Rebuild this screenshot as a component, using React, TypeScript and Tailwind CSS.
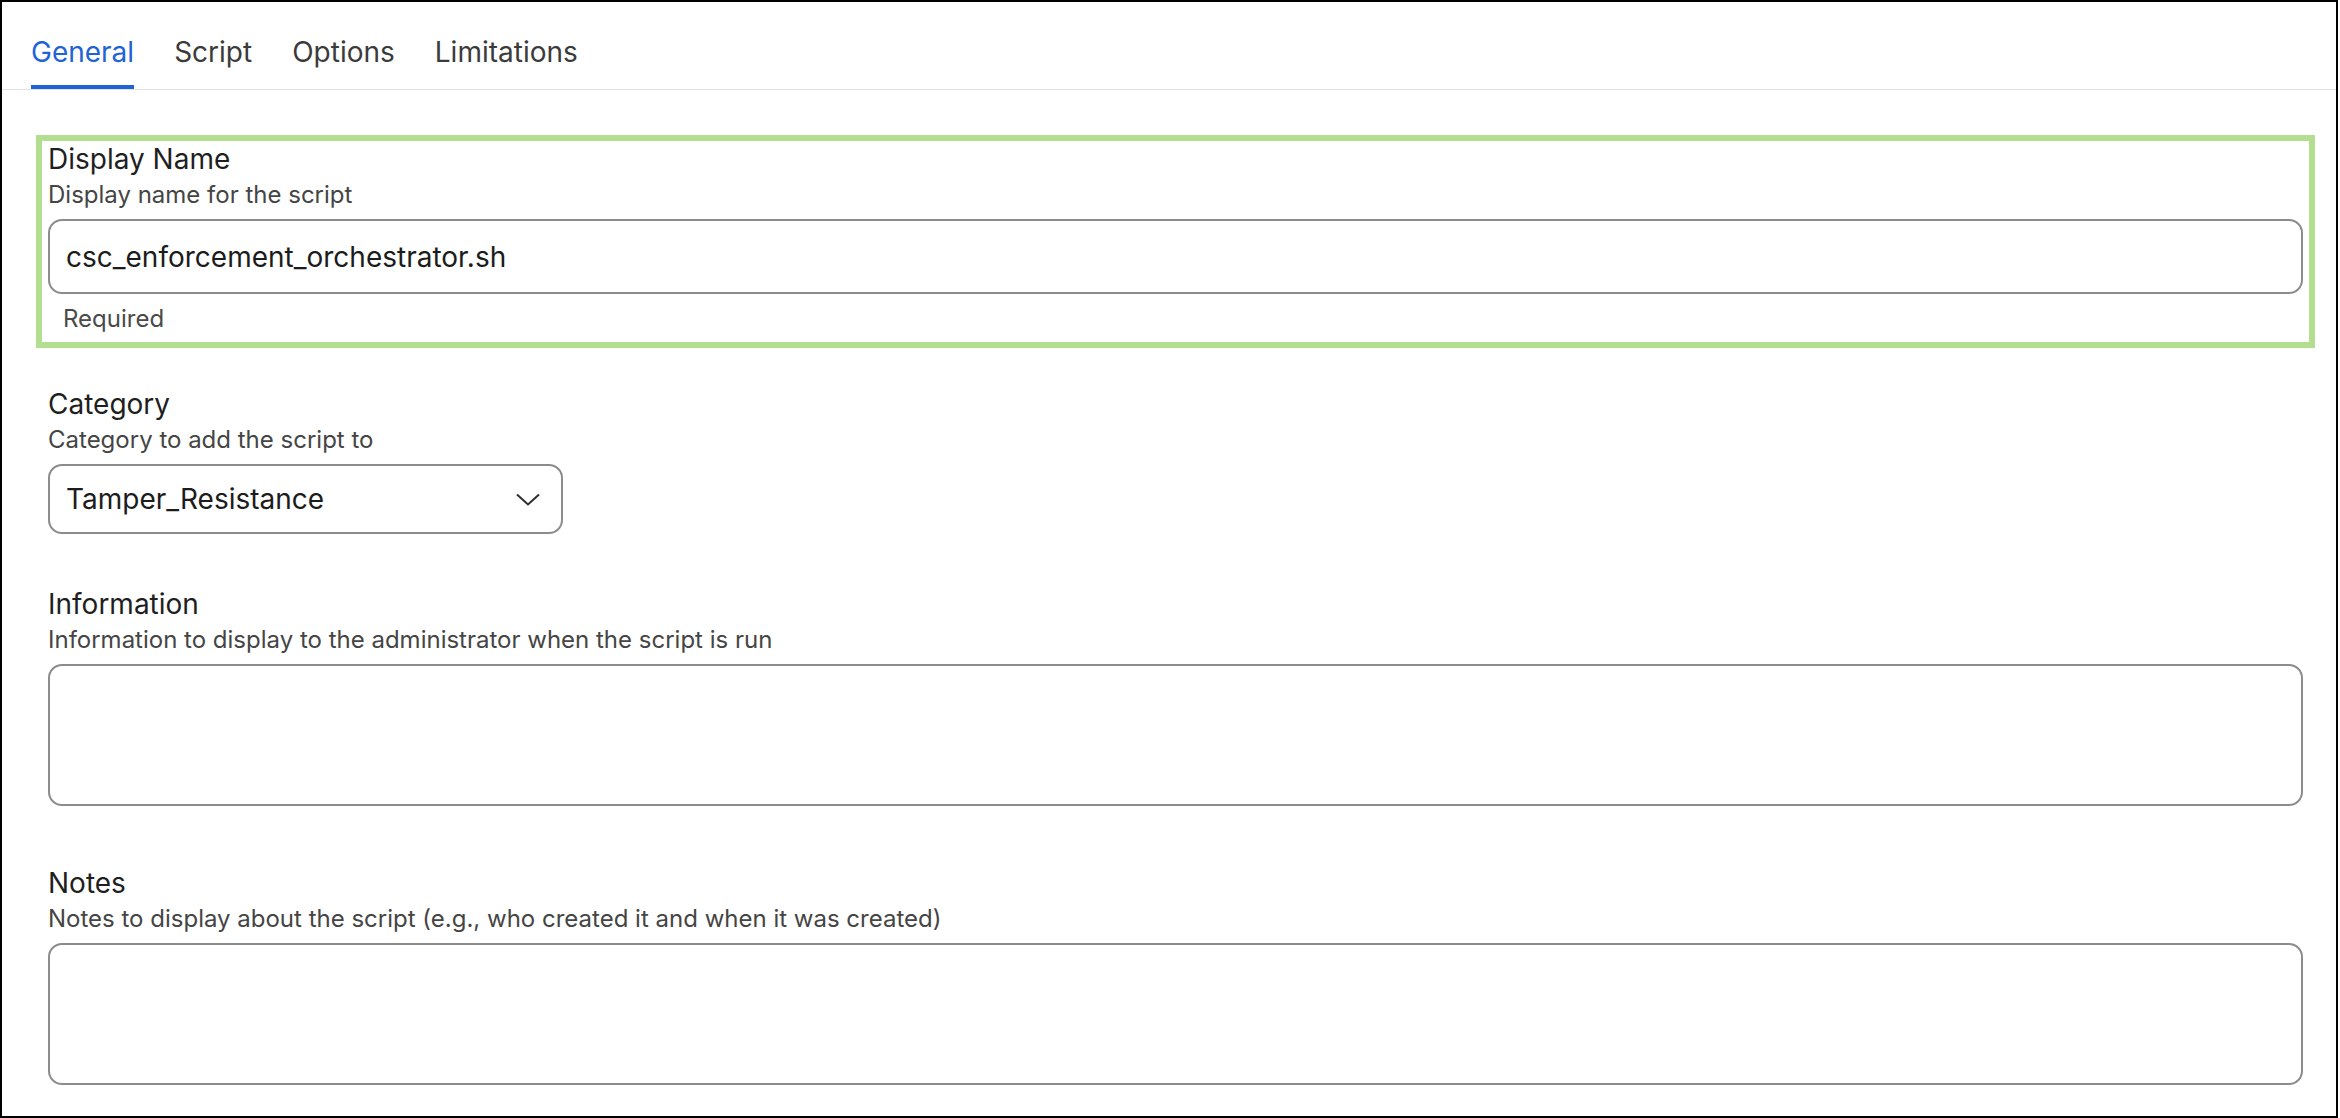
const tabs = ["General", "Script", "Options", "Limitations"];

function FieldHead({ label, help }: { label: string; help: string }) {
  return (
    <div>
      <div className="h-[36px] leading-[36px] text-[28px] text-[#1f1f1f]">{label}</div>
      <div className="h-[35px] leading-[35px] text-[24px] text-[#454545]">{help}</div>
    </div>
  );
}

export default function App() {
  return (
    <div
      className="w-[2338px] h-[1118px] border-2 border-black bg-white overflow-hidden"
      style={{ fontFamily: "Inter, 'Noto Sans', sans-serif" }}
    >
      <div className="flex gap-[40px] pl-[29px] pt-[32px] border-b border-[#e2e2e2]">
        {tabs.map((t, i) => (
          <div
            key={t}
            className={`h-[55px] leading-[36px] text-[28px] border-b-4 ${
              i === 0 ? "text-[#1f63d6] border-[#1f63d6]" : "text-[#3b3b3b] border-transparent"
            }`}
          >
            {t}
          </div>
        ))}
      </div>

      <div className="pl-[46px] pr-[33px]">
        <div className="-mx-[12px] mt-[45px] border-[6px] border-[#b3dd8f] px-[6px] pb-[8px]">
          <FieldHead label="Display Name" help="Display name for the script" />
          <div className="mt-[7px] h-[75px] rounded-[14px] border-2 border-[#8c8c8c] px-[16px] flex items-center text-[28px] text-[#1c1c1c]">
            csc_enforcement_orchestrator.sh
          </div>
          <div className="mt-[10px] pl-[15px] h-[30px] leading-[30px] text-[24px] text-[#4a4a4a]">Required</div>
        </div>

        <div className="mt-[38px]">
          <FieldHead label="Category" help="Category to add the script to" />
          <div className="mt-[7px] w-[515px] h-[70px] rounded-[14px] border-2 border-[#8c8c8c] pl-[16px] pr-[21px] flex items-center justify-between text-[28px] text-[#1c1c1c]">
            <span>Tamper_Resistance</span>
            <svg width="24" height="13" viewBox="0 0 24 13" fill="none">
              <path d="M1 1.5 L12 11.5 L23 1.5" stroke="#2e2e2e" strokeWidth="2" />
            </svg>
          </div>
        </div>

        <div className="mt-[52px]">
          <FieldHead
            label="Information"
            help="Information to display to the administrator when the script is run"
          />
          <div className="mt-[7px] h-[142px] rounded-[14px] border-2 border-[#8c8c8c]" />
        </div>

        <div className="mt-[59px]">
          <FieldHead
            label="Notes"
            help="Notes to display about the script (e.g., who created it and when it was created)"
          />
          <div className="mt-[7px] h-[142px] rounded-[14px] border-2 border-[#8c8c8c]" />
        </div>
      </div>
    </div>
  );
}
